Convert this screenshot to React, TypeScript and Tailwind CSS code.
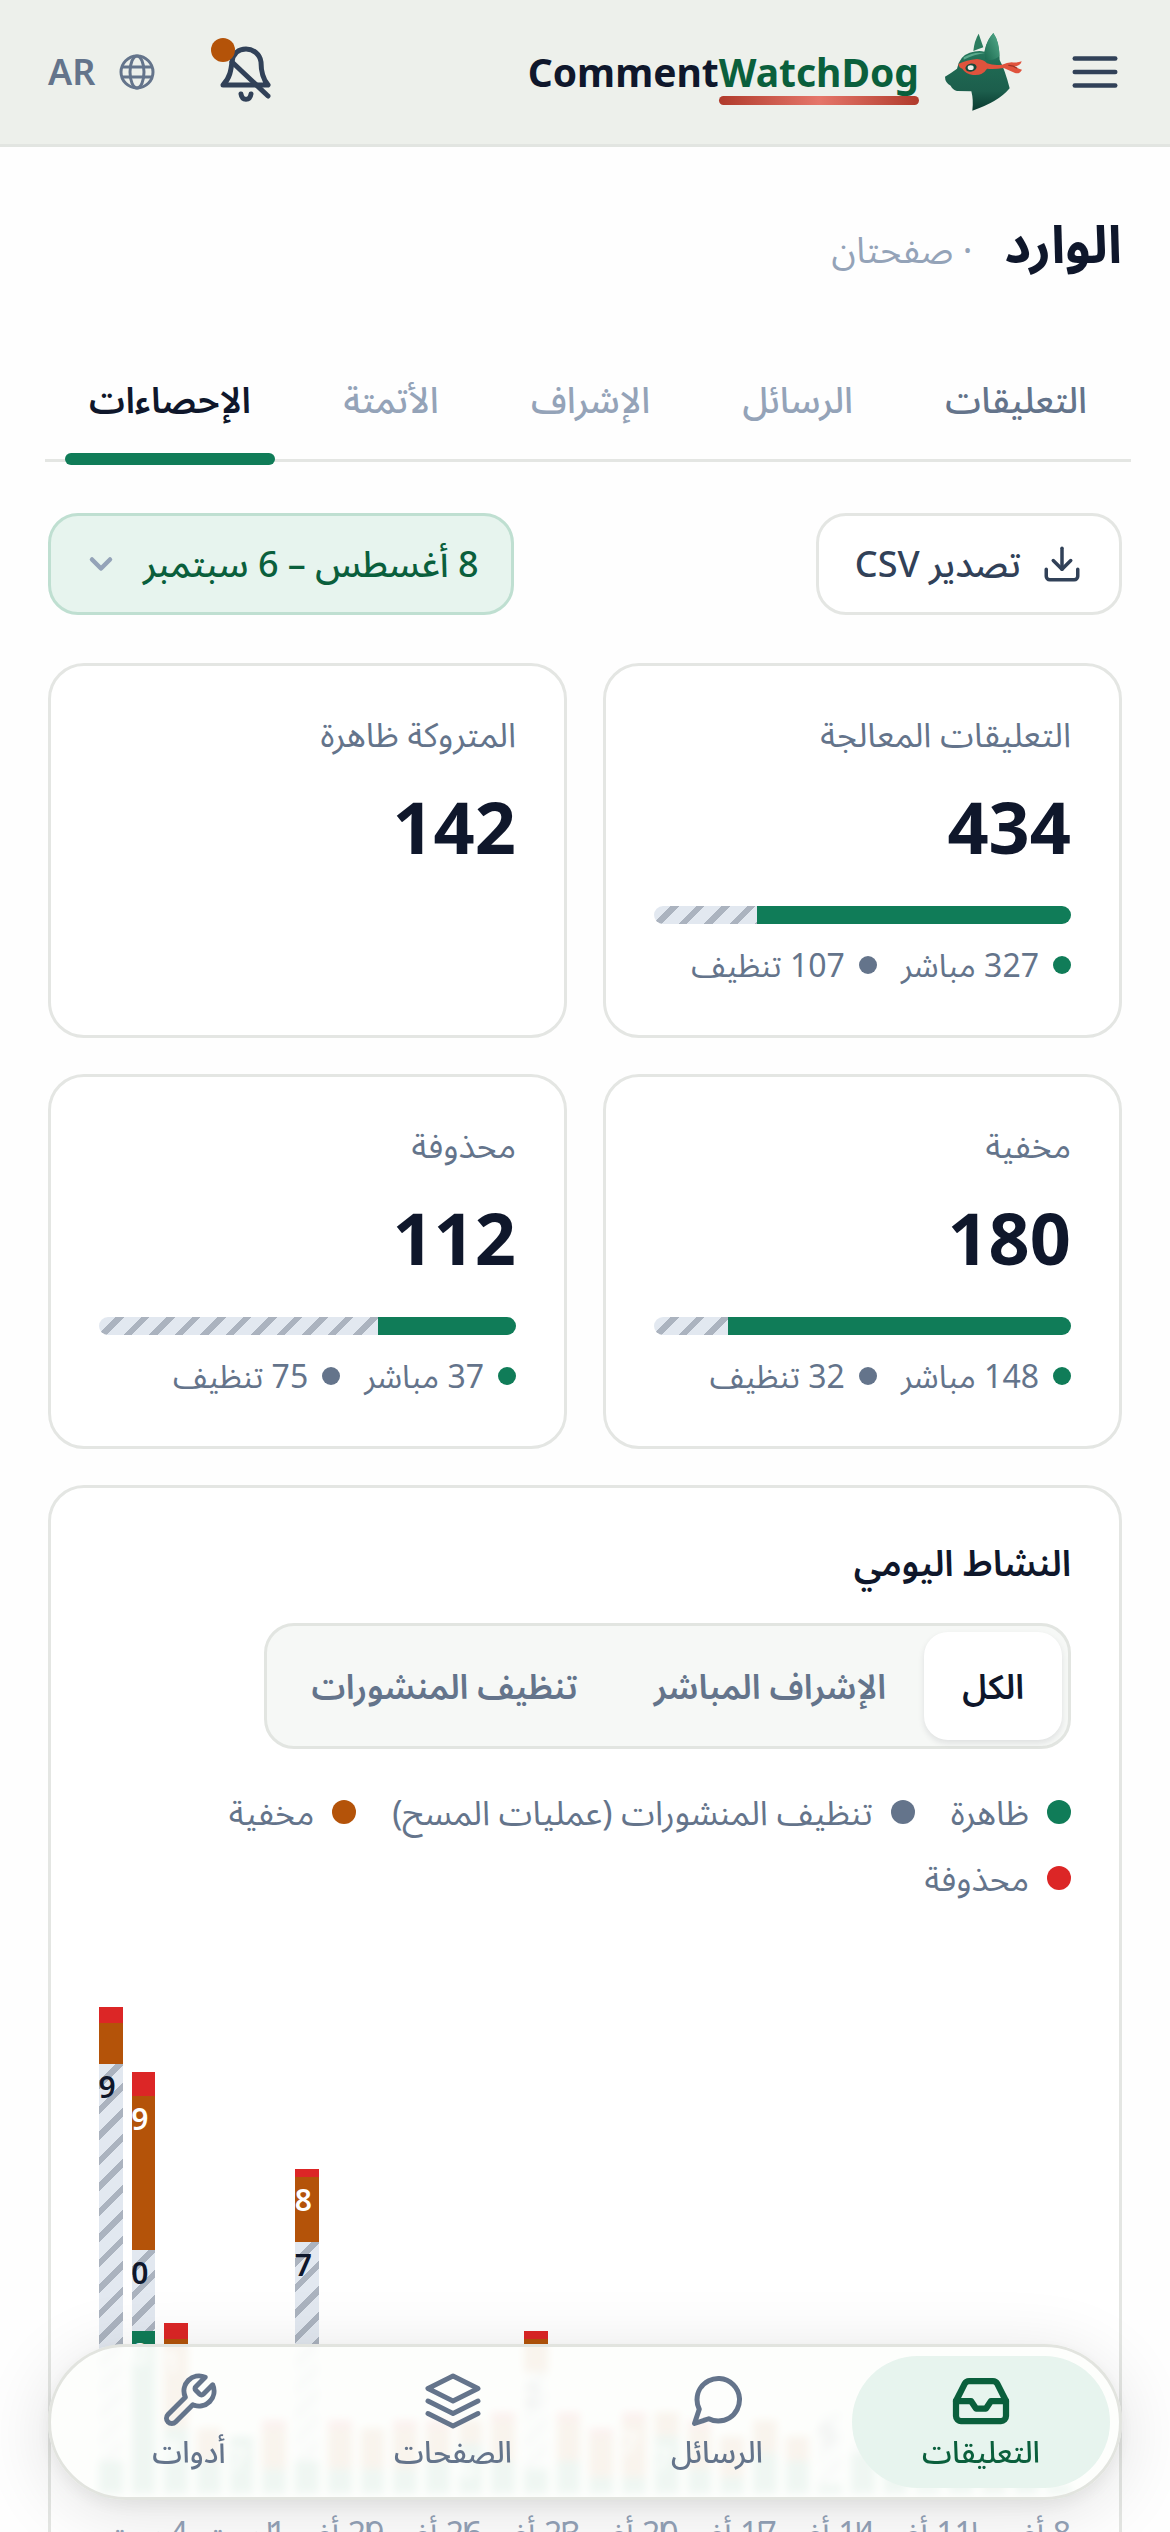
import clsx from 'clsx'
import { ChevronDown, Download } from 'lucide-react'
import { FiInbox, FiLayers, FiMenu, FiMessageCircle, FiTool } from 'react-icons/fi'

const tabs = [
  { label: 'التعليقات', tone: 'font-medium text-[#64748b]' },
  { label: 'الرسائل', tone: 'font-medium text-[#94a3b8]' },
  { label: 'الإشراف', tone: 'font-medium text-[#94a3b8]' },
  { label: 'الأتمتة', tone: 'font-medium text-[#94a3b8]' },
  { label: 'الإحصاءات', tone: 'font-semibold text-slate-900', active: true },
]

const stats = [
  { label: 'التعليقات المعالجة', value: 434, live: 327, cleanup: 107 },
  { label: 'المتروكة ظاهرة', value: 142 },
  { label: 'مخفية', value: 180, live: 148, cleanup: 32 },
  { label: 'محذوفة', value: 112, live: 37, cleanup: 75 },
]

const scopes = ['الكل', 'الإشراف المباشر', 'تنظيف المنشورات']

const legend = [
  { label: 'ظاهرة', color: 'bg-[#107c58]' },
  { label: 'تنظيف المنشورات (عمليات المسح)', color: 'bg-[#64748b]' },
  { label: 'مخفية', color: 'bg-[#b45309]' },
  { label: 'محذوفة', color: 'bg-[#dc2626]' },
]

const navItems = [
  { label: 'التعليقات', icon: FiInbox, active: true },
  { label: 'الرسائل', icon: FiMessageCircle },
  { label: 'الصفحات', icon: FiLayers },
  { label: 'أدوات', icon: FiTool },
]

// one row per day: [visible, cleanup, hidden, deleted]
const days = [
  [1, 0, 0, 0],
  [2, 0, 0, 0],
  [1, 0, 1, 0],
  [2, 0, 0, 0],
  [1, 0, 0, 0],
  [4, 0, 0, 0],
  [5, 2, 0, 0],
  [1, 9, 0, 0],
  [4, 0, 3, 0],
  [5, 0, 4, 0],
  [2, 0, 5, 0],
  [3, 0, 5, 1],
  [7, 0, 3, 0],
  [2, 0, 7, 1],
  [2, 0, 5, 1],
  [4, 0, 5, 1],
  [3, 12, 4, 1],
  [4, 0, 5, 1],
  [6, 0, 3, 0],
  [4, 0, 4, 1],
  [3, 0, 5, 1],
  [3, 0, 5, 0],
  [3, 0, 5, 1],
  [4, 27, 8, 1],
  [3, 0, 5, 1],
  [7, 0, 0, 0],
  [4, 0, 4, 0],
  [8, 0, 11, 2],
  [20, 10, 19, 3],
  [4, 49, 5, 2],
]

const axis = [
  '8 أغسطس',
  '11 أغسطس',
  '14 أغسطس',
  '17 أغسطس',
  '20 أغسطس',
  '23 أغسطس',
  '26 أغسطس',
  '29 أغسطس',
  '1 سبتمبر',
  '4 سبتمبر',
]

const MAX_PER_DAY = 60
const MIN_LABELLED = 6

const hatch =
  'bg-[repeating-linear-gradient(135deg,#e2e8f0_0px,#e2e8f0_12px,#abb3bf_12px,#abb3bf_18px)]'

const segments = [
  clsx('bg-[#107c58] text-white'),
  clsx(hatch, 'text-slate-900'),
  clsx('bg-[#b45309] text-white'),
  clsx('bg-[#dc2626] text-white'),
]

function DogLogo() {
  return (
    <svg viewBox="70 36 243 240" className="h-20 w-[81px]" aria-hidden="true">
      <defs>
        <linearGradient id="coat" x1="0" y1="0" x2="0" y2="1">
          <stop offset="0" stopColor="#2f8a6a" />
          <stop offset="0.45" stopColor="#1f6852" />
          <stop offset="0.75" stopColor="#1c5e4c" />
          <stop offset="1" stopColor="#0a3a30" />
        </linearGradient>
        <linearGradient id="ear" x1="1" y1="0" x2="0" y2="1">
          <stop offset="0" stopColor="#54ab8b" />
          <stop offset="1" stopColor="#1c6a50" />
        </linearGradient>
      </defs>
      <path d="M177 41 L191 82 Q177 87 161 93 Q164 62 177 41Z" fill="#2c7d5f" />
      <path
        d="M221 39 Q240 66 240 120 Q256 150 270 205 Q236 246 158 272 Q162 240 155 214 L112 213 Q98 209 93 197 Q76 188 76 170 Q96 158 112 146 Q119 108 150 98 Q176 90 194 95 Q200 62 221 39Z"
        fill="url(#coat)"
      />
      <path d="M221 39 Q240 66 239 108 Q222 124 196 118 Q190 74 221 39Z" fill="url(#ear)" />
      <path d="M132 112 Q160 94 196 99 Q165 103 132 119Z" fill="#5aa98c" />
      <path
        d="M116 132 Q140 120 172 117 Q192 118 202 130 Q224 138 247 134 Q262 128 276 127 Q292 129 306 124 Q302 139 284 139 Q296 147 307 149 Q300 163 286 159 Q268 151 252 144 Q226 148 202 146 Q188 168 160 165 Q138 162 128 146 Q118 144 116 132Z"
        fill="#e0533d"
      />
      <path d="M266 136 Q280 135 292 145" stroke="#9d3527" strokeWidth="4" fill="none" />
      <ellipse cx="154" cy="143" rx="17" ry="12" fill="#174b3c" transform="rotate(-12 154 143)" />
      <ellipse cx="153" cy="143" rx="9" ry="7" fill="#edf0eb" />
    </svg>
  )
}

function BellOffIcon() {
  return (
    <svg
      viewBox="0 0 60 60"
      className="size-[60px]"
      fill="none"
      stroke="currentColor"
      strokeWidth="5"
      strokeLinecap="round"
      strokeLinejoin="round"
      aria-hidden="true"
    >
      <path d="M8 43 C15 36 16 28 17 20 C18 11 24 7 31 7 C38 7 45 12 46 20 C46 28 47 36 53 43 Z" />
      <path d="M26 52 C27 59 35 59 36 52" />
      <path d="M17 20 L53 54" />
    </svg>
  )
}

function GlobeIcon() {
  return (
    <svg viewBox="0 0 36 36" className="size-9" fill="none" stroke="currentColor" strokeWidth="3" aria-hidden="true">
      <circle cx="18" cy="18" r="16" />
      <ellipse cx="18" cy="18" rx="7" ry="16" />
      <path d="M3 13 H33 M3 23 H33" />
    </svg>
  )
}

function StatCard({ label, value, live, cleanup }: { label: string; value: number; live?: number; cleanup?: number }) {
  return (
    <section className="rounded-[36px] border-3 border-[#e4e6e3] bg-white p-12">
      <h2 className="text-[34px] leading-[40px] text-[#64748b]">{label}</h2>
      <p className="mt-9 text-7xl leading-none font-bold text-slate-900">{value}</p>
      {live !== undefined && cleanup !== undefined && (
        <>
          <div className="mt-11 flex h-[18px] overflow-hidden rounded-full">
            <div className="bg-[#107c58]" style={{ flexGrow: live }} />
            <div className={hatch} style={{ flexGrow: cleanup }} />
          </div>
          <ul className="mt-[18px] flex gap-6 text-[32px] leading-[45px] text-[#64748b]">
            <li className="flex items-center gap-[14px]">
              <span className="size-[18px] rounded-full bg-[#107c58]" />
              {live} مباشر
            </li>
            <li className="flex items-center gap-[14px]">
              <span className="size-[18px] rounded-full bg-[#64748b]" />
              {cleanup} تنظيف
            </li>
          </ul>
        </>
      )}
    </section>
  )
}

function ActivityChart() {
  return (
    <div className="mt-[105px]">
      <div className="flex h-[486px] gap-[9px]">
        {days.map((day, i) => (
          <div key={i} className="flex min-w-0 flex-1 flex-col-reverse">
            {day.map((count, s) =>
              count > 0 ? (
                <div
                  key={s}
                  className={clsx(
                    'overflow-hidden pt-2 pr-[7px] text-[30px] leading-[30px] font-semibold whitespace-nowrap',
                    segments[s],
                  )}
                  style={{ height: `${(count / MAX_PER_DAY) * 100}%` }}
                >
                  {count >= MIN_LABELLED && count}
                </div>
              ) : null,
            )}
          </div>
        ))}
      </div>
      <div className="mt-4 grid grid-cols-10 gap-[9px] text-[32px] leading-[48px] text-[#94a3b8]">
        {axis.map((label) => (
          <span key={label} className="min-w-0 whitespace-nowrap">
            {label}
          </span>
        ))}
      </div>
    </div>
  )
}

export default function App() {
  return (
    <div
      dir="rtl"
      className="relative flex h-screen flex-col overflow-hidden bg-[#fefefe] font-['Noto_Sans','Noto_Sans_Arabic',sans-serif] text-slate-900"
    >
      <header className="flex h-[147px] shrink-0 items-center justify-between border-b-3 border-[#e2e5e1] bg-[#edf0eb] px-12">
        <div className="flex items-center gap-11">
          <button type="button" aria-label="القائمة" className="text-slate-700">
            <FiMenu className="size-[54px]" />
          </button>
          <a href="#" dir="ltr" className="flex items-center gap-6">
            <span className="flex text-[39px] leading-[54px] font-bold">
              Comment
              <span className="relative text-[#0a5f3c]">
                WatchDog
                <span className="absolute inset-x-0 -bottom-[6px] h-[9px] rounded-full bg-linear-to-r from-[#b03a2b] via-[#e5766a] to-[#b03a2b]" />
              </span>
            </span>
            <DogLogo />
          </a>
        </div>
        <div className="flex items-center gap-[60px]">
          <button type="button" aria-label="الإشعارات" className="relative text-slate-700">
            <BellOffIcon />
            <span className="absolute -top-1 -left-1 size-6 rounded-full bg-[#b45309]" />
          </button>
          <button type="button" className="flex items-center gap-6 text-4xl font-semibold text-[#64748b]">
            <GlobeIcon />
            AR
          </button>
        </div>
      </header>

      <main className="min-h-0 flex-1 overflow-hidden px-12">
        <div className="flex items-baseline gap-8 pt-[54px]">
          <h1 className="text-[52px] leading-[84px] font-bold">الوارد</h1>
          <p className="text-4xl text-[#94a3b8]">· صفحتان</p>
        </div>

        <div role="tablist" className="-ms-[9px] -me-[3px] mt-16 flex justify-between border-b-3 border-[#e4e6e3] px-5">
          {tabs.map(({ label, tone, active }) => (
            <button
              key={label}
              type="button"
              role="tab"
              aria-selected={!!active}
              className={clsx('relative px-6 pt-6 pb-8 text-4xl leading-[54px]', tone)}
            >
              {label}
              {active && <span className="absolute inset-x-0 -bottom-[6px] h-3 rounded-full bg-[#107c58]" />}
            </button>
          ))}
        </div>

        <div className="mt-[51px] flex items-center justify-between text-4xl font-medium">
          <button
            type="button"
            className="flex h-[102px] items-center gap-5 rounded-[30px] border-3 border-[#e4e6e3] bg-white px-9 text-slate-700"
          >
            <Download className="size-[42px]" />
            تصدير CSV
          </button>
          <button
            type="button"
            className="flex h-[102px] items-center gap-6 rounded-[30px] border-3 border-[#bfdfd1] bg-[#e7f4ee] px-8 text-[#0a5f3c]"
          >
            8 أغسطس – 6 سبتمبر
            <ChevronDown className="size-9 text-[#94a3b8]" strokeWidth={3} />
          </button>
        </div>

        <div className="mt-12 grid grid-cols-2 gap-9">
          {stats.map((stat) => (
            <StatCard key={stat.label} {...stat} />
          ))}
        </div>

        <section className="mt-9 rounded-[36px] border-3 border-[#e4e6e3] bg-white p-12">
          <h2 className="text-4xl leading-[54px] font-semibold">النشاط اليومي</h2>
          <div className="mt-[33px] flex h-[126px] w-fit rounded-[30px] border-3 border-[#e2e5e1] bg-[#f6f8f6] p-[6px]">
            {scopes.map((scope, i) => (
              <button
                key={scope}
                type="button"
                aria-pressed={i === 0}
                className={clsx(
                  'rounded-3xl px-[38px] text-[34px] font-semibold',
                  i === 0 ? 'bg-white text-slate-900 shadow-[0_3px_6px_rgba(15,23,42,0.1)]' : 'text-[#64748b]',
                )}
              >
                {scope}
              </button>
            ))}
          </div>
          <ul className="mt-[39px] flex flex-wrap gap-x-9 gap-y-[18px] text-[34px] leading-[48px] text-[#64748b]">
            {legend.map(({ label, color }) => (
              <li key={label} className="flex items-center gap-[18px]">
                <span className={clsx('size-6 rounded-full', color)} />
                {label}
              </li>
            ))}
          </ul>
          <ActivityChart />
        </section>
      </main>

      <nav className="absolute inset-x-12 bottom-8 flex gap-[6px] rounded-full border-3 border-[#e2e4df] bg-[#fdfefc]/94 p-[9px] shadow-[0_12px_72px_rgba(0,0,0,0.12),0_6px_18px_rgba(0,0,0,0.06)] backdrop-blur-xs">
        {navItems.map(({ label, icon: Icon, active }) => (
          <a
            key={label}
            href="#"
            className={clsx(
              'flex h-[132px] flex-1 flex-col items-center justify-center rounded-full text-[30px] leading-[42px] font-medium',
              active ? 'bg-[#e7f4ee] text-[#0a5f3c]' : 'text-[#64748b]',
            )}
          >
            <Icon className="size-[60px]" strokeWidth={active ? 2.5 : 2} />
            {label}
          </a>
        ))}
      </nav>
    </div>
  )
}
